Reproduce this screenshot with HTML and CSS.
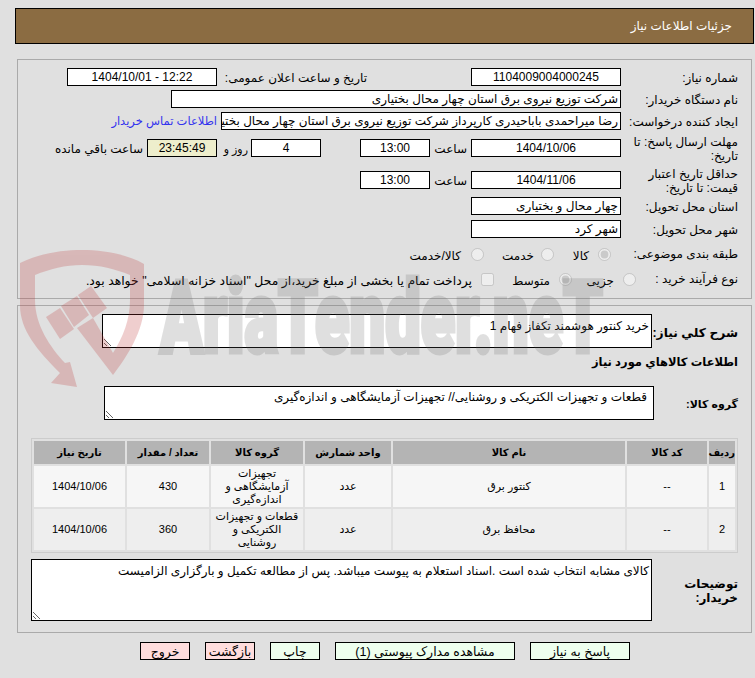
FILE: index.html
```html
<!DOCTYPE html>
<html lang="fa" dir="rtl">
<head>
<meta charset="utf-8">
<title>جزئیات اطلاعات نیاز</title>
<link rel="stylesheet" href="styles.css">
</head>
<body>
<header class="title"><h1>جزئیات اطلاعات نیاز</h1></header>

<section class="panel form">
  <div class="row">
    <label class="lbl">شماره نیاز:</label>
    <output class="box w150">1104009004000245</output>
    <label class="lbl-pub">تاریخ و ساعت اعلان عمومی:</label>
    <output class="box w150">12:22 - 1404/10/01</output>
  </div>
  <div class="row">
    <label class="lbl">نام دستگاه خریدار:</label>
    <output class="box w450 start">شرکت توزیع نیروی برق استان چهار محال بختیاری</output>
  </div>
  <div class="row">
    <label class="lbl">ایجاد کننده درخواست:</label>
    <output class="box w400 start">رضا میراحمدی باباحیدری کارپرداز شرکت توزیع نیروی برق استان چهار محال بختیاری</output>
    <a class="link" href="#">اطلاعات تماس خریدار</a>
  </div>
  <div class="row">
    <label class="lbl two">مهلت ارسال پاسخ: تا تاریخ:</label>
    <output class="box w150">1404/10/06</output>
    <span class="unit">ساعت</span>
    <output class="box w70">13:00</output>
    <output class="box w70 days">4</output>
    <span class="unit-days">روز و</span>
    <output class="box w70 timer">23:45:49</output>
    <span class="unit-left">ساعت باقي مانده</span>
  </div>
  <div class="row">
    <label class="lbl two">حداقل تاریخ اعتبار قیمت: تا تاریخ:</label>
    <output class="box w150">1404/11/06</output>
    <span class="unit">ساعت</span>
    <output class="box w70">13:00</output>
  </div>
  <div class="row">
    <label class="lbl">استان محل تحویل:</label>
    <output class="box w150 start">چهار محال و بختیاری</output>
  </div>
  <div class="row">
    <label class="lbl">شهر محل تحویل:</label>
    <output class="box w150 start">شهر کرد</output>
  </div>
  <div class="row">
    <label class="lbl">طبقه بندی موضوعی:</label>
    <span class="choices kind">
      <span class="choice c1"><input type="radio" name="k" disabled checked><span>کالا</span></span>
      <span class="choice c2"><input type="radio" name="k" disabled><span>خدمت</span></span>
      <span class="choice c2b"><input type="radio" name="k" disabled><span>کالا/خدمت</span></span>
    </span>
  </div>
  <div class="row">
    <label class="lbl">نوع فرآیند خرید :</label>
    <span class="choices proc">
      <span class="choice c3"><input type="radio" name="p" disabled><span>جزیی</span></span>
      <span class="choice c4"><input type="radio" name="p" disabled checked><span>متوسط</span></span>
      <span class="choice"><input type="checkbox" disabled><span class="pay">پرداخت تمام یا بخشی از مبلغ خرید،از محل "اسناد خزانه اسلامی" خواهد بود.</span></span>
    </span>
  </div>
</section>

<section class="panel second">
  <div class="desc">
    <label class="blbl">شرح کلي نیاز:</label>
    <textarea class="ta ta-desc" readonly>خرید کنتور هوشمند تکفاز فهام 1</textarea>
  </div>
  <h2 class="subhead">اطلاعات کالاهاي مورد نياز</h2>
  <div class="group">
    <label class="blbl">گروه کالا:</label>
    <textarea class="ta ta-group" readonly>قطعات و تجهیزات الکتریکی و روشنایی// تجهیزات آزمایشگاهی و اندازه‌گیری</textarea>
  </div>
  <table class="items">
    <thead>
      <tr><th class="c-r">رديف</th><th class="c-code">کد کالا</th><th class="c-name">نام کالا</th><th class="c-unit">واحد شمارش</th><th class="c-grp">گروه کالا</th><th class="c-qty">تعداد / مقدار</th><th class="c-date">تاریخ نیاز</th></tr>
    </thead>
    <tbody>
      <tr><td>1</td><td>--</td><td>کنتور برق</td><td>عدد</td><td>تجهیزات آزمایشگاهی و اندازه‌گیری</td><td>430</td><td>1404/10/06</td></tr>
      <tr><td>2</td><td>--</td><td>محافظ برق</td><td>عدد</td><td>قطعات و تجهیزات الکتریکی و روشنایی</td><td>360</td><td>1404/10/06</td></tr>
    </tbody>
  </table>
  <div class="notes">
    <label class="blbl nl">توضیحات خریدار:</label>
    <textarea class="ta ta-notes" readonly>کالای مشابه انتخاب شده است .اسناد استعلام به پیوست میباشد. پس از مطالعه تکمیل و بارگزاری الزامیست</textarea>
  </div>
</section>

<nav class="actions">
  <button class="btn ok w100">پاسخ به نیاز</button>
  <button class="btn ok w180">مشاهده مدارک پیوستی (1)</button>
  <button class="btn ok w50">چاپ</button>
  <button class="btn no w50">بازگشت</button>
  <button class="btn no w50">خروج</button>
</nav>

<svg class="watermark" width="700" height="150" viewBox="0 0 700 150" aria-hidden="true">
  <g class="wm-red">
    <path d="M5 18C25 8 48 5 67 5C88 5 112 9 129 19L129 60C129 85 112 112 98 130L98 108C108 92 115 75 115 55L115 30C100 24 85 20 67 20C50 20 35 24 20 30L20 55C20 80 35 102 50 118L55 117L62 142L36 138L45 128C22 105 5 85 5 60Z"/>
    <path d="M62 83L78 73L98 108L98 130Z"/>
    <path d="M31 72L45 63L59 84L45 94Z"/>
    <path d="M46 61L62 51L74 70L59 82Z"/>
    <path d="M63 50L76 41L92 63L78 73Z"/>
  </g>
  <text class="wm-gray" x="145" y="107" textLength="443" lengthAdjust="spacingAndGlyphs">AriaTender.neT</text>
</svg>
</body>
</html>
```

FILE: styles.css
```css
* { box-sizing: border-box; }
html, body { margin: 0; padding: 0; }
body {
  position: relative;
  width: 755px;
  height: 678px;
  overflow: hidden;
  background: #e0e0e0;
  font-family: "Liberation Sans", "DejaVu Sans", sans-serif;
  font-size: 12px;
  color: #000;
  padding-top: 8px;
}
.title {
  width: 739px;
  height: 36px;
  margin-right: 1px;
  background: #8b6c42;
  border: 1px solid #000;
  color: #fff;
  display: flex;
  align-items: center;
  padding-right: 21px;
}
.title h1 { margin: 0; font-size: 12px; font-weight: normal; }
.panel {
  width: 735px;
  margin-right: 3px;
  border: 1px solid #aaa;
}
.form {
  margin-top: 15px;
  height: 240px;
  padding: 8px 13px 0 0;
  display: grid;
  grid-template-rows: 22px 22px 27px 32px 26px 23px 24px 25px 25px;
}
.row { display: flex; align-items: flex-start; line-height: 18px; }
.lbl { width: 117px; flex: none; line-height: 18px; padding-top: 1px; }
.lbl.two { line-height: 14px; margin-top: -4px; padding-top: 0; }
.box {
  display: block;
  flex: none;
  height: 18px;
  border: 1px solid #000;
  background: #fff;
  text-align: center;
  line-height: 16px;
  overflow: hidden;
  white-space: nowrap;
  padding: 0 2px;
}
.box.start { text-align: right; }
.w150 { width: 150px; }
.w450 { width: 450px; }
.w400 { width: 400px; }
.w70 { width: 70px; }
.lbl-pub { width: 254px; padding-right: 104px; padding-top: 1px; flex: none; white-space: nowrap; }
.link { color: #3333ee; font-size: 11.5px; text-decoration: none; margin-right: 4px; white-space: nowrap; }
.unit { width: 41px; flex: none; padding-right: 4px; padding-top: 1px; }
.days { margin-right: 39px; }
.unit-days { width: 34px; flex: none; padding-right: 3px; font-size: 11px; padding-top: 1px; }
.timer { background: #eeeecc; }
.unit-left { margin-right: 4px; white-space: nowrap; padding-top: 1px; }
.choices { display: flex; align-items: center; height: 20px; }
.choice { display: flex; align-items: center; }
.choice span { padding-top: 3px; }
.choice input { width: 13px; height: 13px; margin: 0 0 0 9px; flex: none; }
.kind { margin-right: 10px; }
.c1 { width: 57px; }
.c2 { width: 70px; }
.c2 input { margin-left: 7px; }
.c2b input { margin-left: 10px; }
.proc { margin-right: -15px; }
.c3 { width: 64px; }
.c4 { width: 78px; }
.pay { white-space: nowrap; font-size: 12.4px; }

.second { margin-top: 6px; height: 328px; position: relative; padding: 8px 13px 0 0; }
.desc { display: flex; align-items: center; height: 34px; }
.blbl { font-weight: bold; font-size: 11px; flex: none; white-space: nowrap; }
.desc .blbl { width: 86px; font-size: 12.3px; padding-top: 4px; }
.ta {
  display: block;
  flex: none;
  border: 1px solid #000;
  background: #fff;
  font: 12px/16px "Liberation Sans", "DejaVu Sans", sans-serif;
  color: #000;
  padding: 2px;
  margin: 0;
  border-radius: 0;
  outline: none;
}
.ta-desc { width: 550px; height: 34px; padding-top: 3px; }
.subhead { margin: 5px 0 0; font-size: 11.5px; font-weight: bold; line-height: 18px; }
.group { display: flex; align-items: center; height: 34px; margin-top: 15px; }
.group .blbl { width: 84px; padding-top: 2px; }
.ta-group { width: 550px; height: 34px; padding-right: 6px; }
.items {
  width: 707px;
  margin: 18px 0 0 0;
  border: 1px solid #ccc;
  border-collapse: separate;
  border-spacing: 2px;
  table-layout: fixed;
  text-align: center;
  font-size: 11px;
}
.items th { background: #b4b4b4; height: 23px; padding: 0; font-size: 10px; }
.items td { height: 41px; padding: 0 2px; line-height: 13px; }
.items tbody tr:nth-child(1) td { background: #f6f6f6; }
.items tbody tr:nth-child(2) td { background: #eeeeee; }
.c-r { width: 26px; }
.c-code { width: 80px; }
.c-name { width: 232px; }
.c-unit { width: 86px; }
.c-grp { width: 92px; }
.c-qty { width: 82px; }
.c-date { width: 91px; }
.notes { display: flex; align-items: center; height: 62px; margin-top: 6px; }
.notes .nl { width: 86px; line-height: 14px; font-size: 12px; white-space: normal; padding-top: 2px; }
.ta-notes { width: 621px; height: 62px; padding-top: 3px; }

.actions { display: flex; margin-top: 9px; margin-right: 125px; gap: 15px; }
.btn {
  height: 18px;
  padding: 3px 0 0;
  border: 1px solid #000;
  font: 12.5px/13px "Liberation Sans", "DejaVu Sans", sans-serif;
  color: #000;
  border-radius: 0;
  white-space: nowrap;
  overflow: hidden;
}
.ok { background: #eeffee; }
.no { background: #ffdddd; }
.w100 { width: 100px; }
.w180 { width: 180px; }
.w50 { width: 50px; }

.watermark { position: absolute; left: 15px; top: 245px; pointer-events: none; direction: ltr; }
.wm-red { fill: #bd3232; opacity: .23; }
.wm-gray {
  direction: ltr;
  fill: #666;
  stroke: #666;
  stroke-width: 5px;
  opacity: .2;
  font: 900 100px "Roboto", sans-serif;
}
```
